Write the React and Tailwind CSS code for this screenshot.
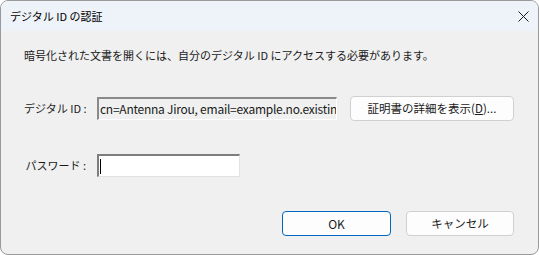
import React from 'react';

// Digital ID authentication dialog
const font = { fontFamily: '"Noto Sans CJK JP", "Noto Sans", sans-serif' };

const App = () => {
    return (
        <div className="w-[539px] h-[255px] bg-white" style={font}>
            <div className="w-full h-full border border-[#9a9a9a] rounded-[8px] overflow-hidden bg-[#f0f0f0] flex flex-col text-[11px] text-[#1a1a1a]">
                {/* Title bar */}
                <div className="h-[30px] bg-[#eef2f9] flex items-center justify-between pl-[9px] pr-[9px] shrink-0">
                    <span className="text-[11px] text-black">デジタル ID の認証</span>
                    <svg width="11" height="11" viewBox="0 0 11 11">
                        <path d="M0.5 0.5 L10.5 10.5 M10.5 0.5 L0.5 10.5" stroke="#1a1a1a" strokeWidth="1" />
                    </svg>
                </div>

                {/* Body */}
                <div className="flex flex-col pl-[23px] pr-[24px] pt-[16px]">
                    <p className="leading-[16px] h-[16px] whitespace-nowrap">暗号化された文書を開くには、自分のデジタル ID にアクセスする必要があります。</p>

                    <div className="flex items-center mt-[33px] h-[25px]">
                        <span className="w-[64px] text-right whitespace-nowrap pr-[2px]">デジタル ID :</span>
                        <div className="ml-[9px] w-[240px] h-[23px] border-t-2 border-l-2 border-t-[#8a8a8a] border-l-[#8a8a8a] border-b border-r border-b-white border-r-white bg-[#f0f0f0] overflow-hidden whitespace-nowrap leading-[20px] pl-[1px] text-[12px] tracking-[-0.25px]">
                            cn=Antenna Jirou, email=example.no.existing@antenna.co.jp
                        </div>
                        <button className="ml-[13px] w-[164px] h-[25px] bg-[#fdfdfd] border border-[#d0d0d0] rounded-[4px] text-[11.5px] text-[#1a1a1a] whitespace-nowrap">
                            証明書の詳細を表示(<span className="underline">D</span>)...
                        </button>
                    </div>

                    <div className="flex items-center mt-[33px] h-[23px]">
                        <span className="w-[64px] text-right whitespace-nowrap pr-[2px]">パスワード :</span>
                        <div className="ml-[9px] w-[143px] h-[23px] border-t-2 border-l-2 border-t-[#7d7d7d] border-l-[#7d7d7d] border-b border-r border-b-[#e3e3e3] border-r-[#e3e3e3] bg-white flex items-center pl-[1px]">
                            <span className="w-[1px] h-[15px] bg-black"></span>
                        </div>
                    </div>

                    <div className="flex justify-end gap-[15px] mt-[34px]">
                        <button className="w-[109px] h-[25px] bg-[#fdfdfd] border border-[#0067c0] rounded-[4px] text-[12px] text-[#1a1a1a]">
                            OK
                        </button>
                        <button className="w-[108px] h-[25px] bg-[#fdfdfd] border border-[#d0d0d0] rounded-[4px] text-[11.5px] text-[#1a1a1a]">
                            キャンセル
                        </button>
                    </div>
                </div>
            </div>
        </div>
    );
};

export default App;
